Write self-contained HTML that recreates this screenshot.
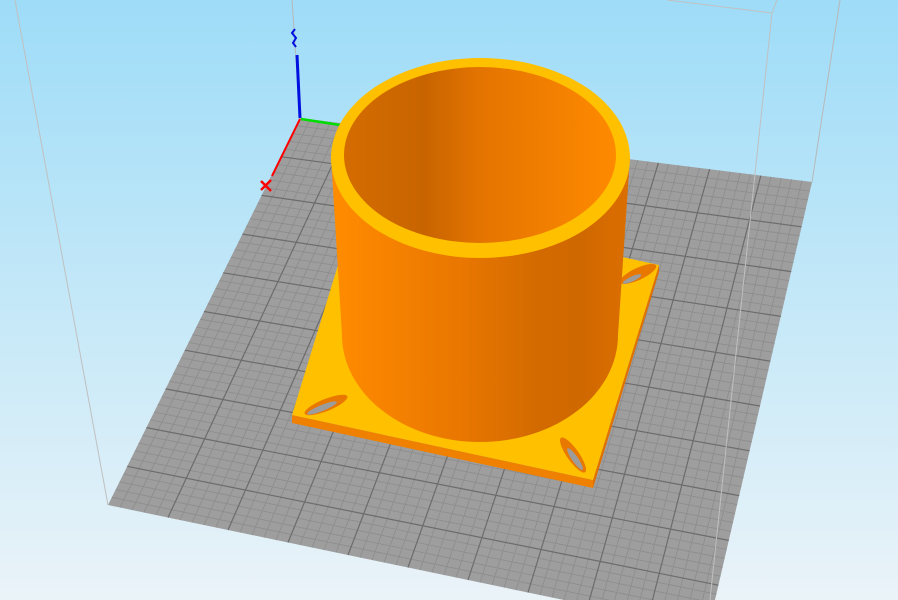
<!DOCTYPE html>
<html><head><meta charset="utf-8"><style>
html,body{margin:0;padding:0;width:898px;height:600px;overflow:hidden}
svg{display:block}
</style></head><body>
<svg width="898" height="600" viewBox="0 0 898 600" xmlns="http://www.w3.org/2000/svg">
<defs>
<linearGradient id="bg" x1="0" y1="0" x2="0" y2="1">
<stop offset="0" stop-color="#9edcf8"/><stop offset="0.5" stop-color="#c4e8f8"/><stop offset="1" stop-color="#eaf3f8"/>
</linearGradient>
<linearGradient id="body" x1="333" y1="0" x2="628" y2="0" gradientUnits="userSpaceOnUse">
<stop offset="0" stop-color="#ff8c00"/><stop offset="0.15" stop-color="#f88400"/><stop offset="0.45" stop-color="#e87600"/><stop offset="0.7" stop-color="#d26a00"/><stop offset="0.85" stop-color="#d06800"/><stop offset="1" stop-color="#dc6e00"/>
</linearGradient>
<linearGradient id="inner" x1="343" y1="0" x2="617" y2="0" gradientUnits="userSpaceOnUse">
<stop offset="0" stop-color="#d46c00"/><stop offset="0.3" stop-color="#c86400"/><stop offset="0.5" stop-color="#e47400"/><stop offset="1" stop-color="#ff8a00"/>
</linearGradient>
</defs>
<rect width="898" height="600" fill="url(#bg)"/>
<g stroke="#b8b8b8" stroke-width="1" fill="none">
<line x1="292" y1="0" x2="300" y2="118"/>
<line x1="840" y1="0" x2="812" y2="182"/>
</g>
<polygon points="300,118 812,182 708,630 108,505" fill="#9e9e9e"/>
<path stroke="#8c8c8c" stroke-width="0.8" fill="none" d="
M310.2,119.3L120,507.5M320.5,120.6L132,510M330.7,121.8L144,512.5M341,123.1L156,515
M361.4,125.7L180,520M371.7,127L192,522.5M381.9,128.2L204,525M392.2,129.5L216,527.5
M412.6,132.1L240,532.5M422.9,133.4L252,535M433.1,134.6L264,537.5M443.4,135.9L276,540
M463.8,138.5L300,545M474.1,139.8L312,547.5M484.3,141L324,550M494.6,142.3L336,552.5
M515,144.9L360,557.5M525.3,146.2L372,560M535.5,147.4L384,562.5M545.8,148.7L396,565
M566.2,151.3L420,570M576.5,152.6L432,572.5M586.7,153.8L444,575M597,155.1L456,577.5
M617.4,157.7L480,582.5M627.7,159L492,585M637.9,160.2L504,587.5M648.2,161.5L516,590
M668.6,164.1L540,595M678.9,165.4L552,597.5M689.1,166.6L564,600M699.4,167.9L576,602.5
M719.8,170.5L600,607.5M730.1,171.8L612,610M740.3,173L624,612.5M750.6,174.3L636,615
M771,176.9L660,620M781.3,178.2L672,622.5M791.5,179.4L684,625M801.8,180.7L696,627.5
M296.2,125.7L809.9,191M292.3,133.5L807.8,199.9M288.5,141.2L805.8,208.9M284.6,149L803.7,217.8
M277,164.4L799.5,235.8M273.1,172.2L797.4,244.7M269.3,179.9L795.4,253.7M265.4,187.7L793.3,262.6
M257.8,203.1L789.1,280.6M253.9,210.9L787,289.5M250.1,218.6L785,298.5M246.2,226.4L782.9,307.4
M238.6,241.8L778.7,325.4M234.7,249.6L776.6,334.3M230.9,257.3L774.6,343.3M227,265.1L772.5,352.2
M219.4,280.5L768.3,370.2M215.5,288.3L766.2,379.1M211.7,296L764.2,388.1M207.8,303.8L762.1,397
M200.2,319.2L757.9,415M196.3,327L755.8,423.9M192.5,334.7L753.8,432.9M188.6,342.5L751.7,441.8
M181,357.9L747.5,459.8M177.1,365.7L745.4,468.7M173.3,373.4L743.4,477.7M169.4,381.2L741.3,486.6
M161.8,396.6L737.1,504.6M157.9,404.4L735,513.5M154.1,412.1L733,522.5M150.2,419.9L730.9,531.4
M142.6,435.3L726.7,549.4M138.7,443.1L724.6,558.3M134.9,450.8L722.6,567.3M131,458.6L720.5,576.2
M123.4,474L716.3,594.2M119.5,481.8L714.2,603.1M115.7,489.5L712.2,612.1M111.8,497.3L710.1,621"/>
<path stroke="#6c6c6c" stroke-width="1.2" fill="none" d="
M351.2,124.4L168,517.5M402.4,130.8L228,530M453.6,137.2L288,542.5M504.8,143.6L348,555M556,150L408,567.5
M607.2,156.4L468,580M658.4,162.8L528,592.5M709.6,169.2L588,605M760.8,175.6L648,617.5
M280.8,156.7L801.6,226.8M261.6,195.4L791.2,271.6M242.4,234.1L780.8,316.4M223.2,272.8L770.4,361.2
M204,311.5L760,406M184.8,350.2L749.6,450.8M165.6,388.9L739.2,495.6M146.4,427.6L728.8,540.4M127.2,466.3L718.4,585.2"/>
<g stroke="#c0c0c0" stroke-width="1" fill="none">
<line x1="15" y1="0" x2="108" y2="505"/>
<line x1="667" y1="0" x2="772" y2="13"/>
<line x1="772" y1="13" x2="777" y2="0"/>
<line x1="772" y1="13" x2="710" y2="600"/>
</g>
<line x1="300" y1="118" x2="297" y2="55" stroke="#0010e0" stroke-width="3"/>
<path d="M295,29 l-3,4 l4,5 l-3,5 l3,4" stroke="#0010e0" stroke-width="2" fill="none"/>
<line x1="301" y1="119" x2="340" y2="125" stroke="#00dd00" stroke-width="2.5"/>
<line x1="300" y1="119" x2="272" y2="176" stroke="#ff0000" stroke-width="2"/>
<path d="M261,181 l10,10 M271,180 l-10,10" stroke="#ff0000" stroke-width="2.5"/>
<polygon points="292,415 593,480 593,488 292,423" fill="#f08000"/>
<polygon points="593,480 659,265 659,272 593,488" fill="#e07000"/>
<polygon points="358,200 659,265 593,480 292,415" fill="#ffc000"/>
<ellipse cx="326" cy="405" rx="23" ry="6" transform="rotate(-22 326 405)" fill="#e87800"/>
<ellipse cx="322" cy="408" rx="16" ry="3" transform="rotate(-22 322 408)" fill="#9c9c9c"/>
<ellipse cx="573" cy="455" rx="21" ry="6" transform="rotate(55 573 455)" fill="#e87800"/>
<ellipse cx="575" cy="459" rx="13" ry="3" transform="rotate(55 575 459)" fill="#9c9c9c"/>
<ellipse cx="638" cy="274" rx="20" ry="6" transform="rotate(-25 638 274)" fill="#e87800"/>
<ellipse cx="632" cy="279" rx="10" ry="2.5" transform="rotate(-25 632 279)" fill="#9c9c9c"/>
<path d="M331,157 L342,335 A138,107 0 0 0 618,335 L630,157 Z" fill="url(#body)"/>
<ellipse cx="480.5" cy="158" rx="149.5" ry="100" fill="#ffc000"/>
<ellipse cx="480" cy="155" rx="136" ry="88" fill="url(#inner)"/>
</svg>
</body></html>
